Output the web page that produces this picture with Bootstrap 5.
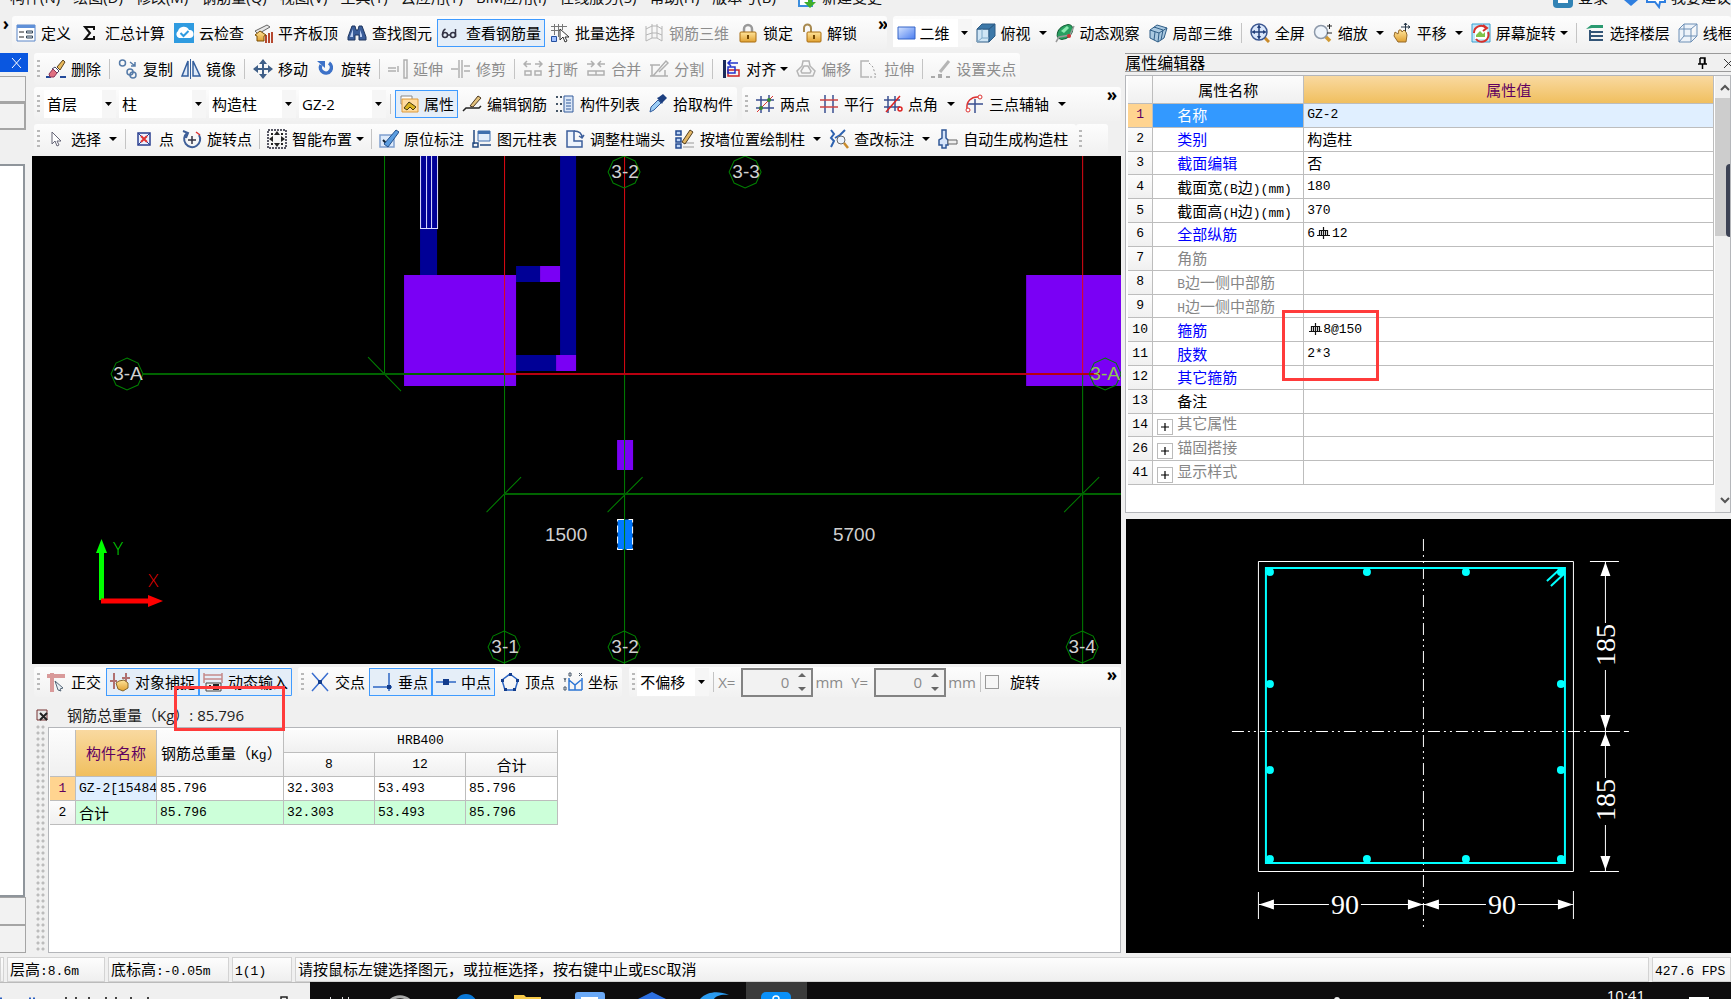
<!DOCTYPE html>
<html lang="zh-CN">
<head>
<meta charset="utf-8">
<meta name="viewport" content="width=device-width, initial-scale=1">
<title>钢筋算量</title>
<link href="https://cdn.jsdelivr.net/npm/bootstrap@5.3.0/dist/css/bootstrap.min.css" rel="stylesheet">
<style>
:root{--ui:"Open Sans","Noto Sans CJK SC",sans-serif;--song:"Liberation Mono","Noto Sans CJK SC",monospace}
body{font:15px/20px var(--ui);color:#000;background:#f0f0f0;height:100vh;overflow:hidden}
.menubar{height:16px;flex:none;padding-left:10px;overflow:hidden;white-space:nowrap}
.menubar a{color:#111;text-decoration:none;margin-right:13px;height:20px;margin-top:-13px;flex:none}
.menubar svg{width:20px;height:20px;margin:-11px 5px 0 0;flex:none}
.strip{background:linear-gradient(#fdfdfd,#f1f1f1);border-radius:3px;white-space:nowrap;overflow:hidden}
.row-a{height:33px}.row-b{height:32px}.row-c{height:34px}.row-d{height:30px}
.tool{display:inline-flex;align-items:center;gap:5px;font:15px/20px var(--ui);color:#000;border:1px solid transparent;border-radius:0;padding:0 3px;height:28px;flex:none}
.tool svg{width:20px;height:20px;flex:none}
.tool:disabled{color:#8d8d8d;opacity:1;border-color:transparent}
.tool.active,.tool.active:hover{background:#e5eef8;border-color:#3f9bff;color:#000}
.tri::after{content:"";border:4px solid transparent;border-top-color:#000;border-bottom:0;margin-left:-1px}
.split{width:16px;padding:0;border:0;background:none;height:28px;display:inline-flex;align-items:center;justify-content:center;flex:none}
.split::after{content:"";border:4px solid transparent;border-top-color:#000;border-bottom:0}
.parting{width:1px;height:20px;background:#c4c4c4;margin:0 4px;flex:none}
.parting.tight{margin:0 3px}
.grip{width:3px;height:18px;margin:0 2px 0 3px;flex:none;background:repeating-linear-gradient(#b9b9b9 0 2px,transparent 2px 5px)}
.more{font:700 17px/16px var(--ui);align-self:flex-start;border:0;background:none;padding:0}
.pick{appearance:none;border:0;height:28px;padding:0 16px 0 3px;font:15px/20px var(--ui);color:#000;border-radius:0;flex:none;
 background:#fff url("data:image/svg+xml,%3Csvg xmlns='http://www.w3.org/2000/svg' width='14' height='28'%3E%3Crect width='14' height='28' fill='%23f6f6f6'/%3E%3Cpath d='M3 12h7l-3.500 4z'/%3E%3C/svg%3E") right center no-repeat}
.w-s{width:72px}.w-m{width:87px}
.leftbar{width:28px;flex:none;margin-right:4px}
.leftbar .shut{height:19px;background:#0a57e0;color:#fff;border:0;padding:0 5px 0 0;text-align:right;line-height:0}
.leftbar .slot{width:26px;border:1px solid #a5a5a5;border-left:0;background:#f2f2f2}
.leftbar .blank{width:25px;border:2px solid #8f959b;border-left:0;background:#fff}
.scene{background:#000;min-height:0;flex:1 1 0;overflow:hidden}
.scene svg{display:block;width:100%;height:100%}
.side{flex:0 0 35%;min-width:0}
.side-title{height:19px;border:1px solid #9a9a9a;border-right:0;border-left:0;font:16px/17px "Noto Sans CJK SC",sans-serif}
.sheet{background:#fff;border:1px solid #b4b6ba}
.data{border-collapse:separate;border-spacing:0;font:15px/18px "Noto Sans CJK SC",sans-serif;table-layout:fixed}
.data th,.data td{border-right:1px solid #bdbdbd;border-bottom:1px solid #bdbdbd;padding:0 0 0 3px;font-weight:400;white-space:nowrap;overflow:hidden}
.data th{background:linear-gradient(#fcfcfc,#f0f0f0);text-align:center;padding:0}
.data th.hot,.data .hot{background:linear-gradient(#f9d9a0,#f0bf5f);color:#5f0060}
.data th.num{font:13px/18px var(--song)}
.data th.num.now{background:#ffd490;color:#5f0060}
.props{width:586px;height:409px;margin-left:2px}
.props tbody tr{height:23px}
.props tbody td:nth-child(2){padding-left:24px}
.props .b{color:#00f}.props .g{color:#868686}
.props tbody td:nth-child(2).fold{padding-left:4px}
.props .fold button{width:16px;height:16px;border:1px solid #bbb;background:#fff;padding:0;margin-right:4px;line-height:0;display:inline-flex;align-items:center;justify-content:center;vertical-align:-2px}
.m{font:13px/18px var(--song)}
span.m{line-height:10px}
.sum td{background:#ccffd9}
.scroller{width:15px;background:#f0f0f0}
.thumb{height:138px;background:#cdcdcd}
.mark-box{position:absolute;border:3px solid #ff3b3b;pointer-events:none}
.spin{width:72px;height:29px;border:2px solid #838383;background:#f2f2f2;margin:0 2px 0 6px}
.spin input{width:46px;border:0;background:none;text-align:right;color:#8a8a8a;padding:0;appearance:textfield}
.spin input::-webkit-inner-spin-button{display:none}
.dim{color:#8a8a8a}
.tick{appearance:none;width:14px;height:14px;border:1px solid #9a9a9a;background:#f6f6f6;margin:0}
.dots{width:10px;background:radial-gradient(circle at 2px 2px,#bcbcbc 1px,transparent 2px) 0 0/5px 6px}
.status{height:25px;gap:3px;margin-top:4px;font:15px/20px "Noto Sans CJK SC",sans-serif;white-space:nowrap}
.status>div{border:1px solid #d3d3d3;background:linear-gradient(#fdfdfd,#efefef);padding:1px 0 0 2px;overflow:hidden}
.taskbar{height:17px;background:#0e0d0e;overflow:hidden}
.taskbar .find{width:310px;background:#f0f0f0;border-top:1px solid #bbb}
.taskbar svg{display:block}
.clock{position:absolute;right:86px;top:3px;color:#fff;font:15px/20px var(--ui)}
</style>
</head>
<body class="d-flex flex-column">
<svg class="position-absolute" width="0" height="0" aria-hidden="true" xmlns="http://www.w3.org/2000/svg">
<defs>
<linearGradient id="gold" x2="0" y2="1"><stop stop-color="#ffe49a"/><stop offset="1" stop-color="#e0a030"/></linearGradient>
<linearGradient id="sky" x2="1" y2="1"><stop stop-color="#d5e4ff"/><stop offset="1" stop-color="#4a7df0"/></linearGradient>
</defs>
<symbol id="define" viewBox="0 0 20 20"><path fill="#fff" stroke="#5a86c8" d="M1 2h18v16H1z"/><path fill="#5f90d8" d="M1 2h18v3H1z"/><path stroke="#222" d="M3 9h5M3 14h5"/><path fill="#dde6f2" stroke="#345" d="M10.500 8h6v2h-6zM10.500 13h6v2h-6z"/></symbol>
<symbol id="sigma" viewBox="0 0 20 20"><path fill="none" stroke="#111" stroke-width="2" d="M14 7V4H5l5 6-5 6h9v-3"/></symbol>
<symbol id="cloud" viewBox="0 0 20 20"><path fill="#2f9be0" d="M0 0h20v20H0z"/><path fill="#fff" d="M5 15a4 4 0 0 1-1-7 6 6 0 0 1 11-1 4 4 0 0 1 1 8z"/><path fill="none" stroke="#2f9be0" stroke-width="2" d="M6.500 10l3 3 5-5"/></symbol>
<symbol id="slab" viewBox="0 0 20 20"><path fill="#e8e8e8" stroke="#666" d="M2 8l12-6 3 2L5 11z"/><path fill="#b5482f" d="M12 12h2v8h-2zM15 10h2v10h-2zM18 9h2v11h-2z"/><path fill="url(#gold)" stroke="#7a4d00" d="M2 12l5-4 6 4-2 1v5H4v-5z"/></symbol>
<symbol id="binoc" viewBox="0 0 20 20"><path fill="#3a5d99" stroke="#1d355f" d="M5 3h3l1 4h2l1-4h3l4 11v3h-7v-5H8v5H1v-3z"/><path fill="#b9cdf0" d="M4 11l2-5v8H3zM13 7l2 5v2h-2z"/></symbol>
<symbol id="glasses" viewBox="0 0 20 20"><g fill="none" stroke="#334" stroke-width="1.500"><circle cx="4" cy="12" r="2.500"/><circle cx="12" cy="12" r="2.500"/><path d="M1.500 12c0-3 1-5 3-6M14.500 14V6M6.500 12h3"/></g></symbol>
<symbol id="batch" viewBox="0 0 20 20"><path stroke="#777" d="M4.500 1v11M8.500 1v13M12.500 1v6M1 3.500h16M1 7.500h10"/><path fill="#9fc0ff" stroke="#234e9e" d="M1.500 13.500h5v5h-5z"/><path fill="#fff" stroke="#333" d="M10 6v11l3-3 2 5 2-1-2-4h4z"/></symbol>
<symbol id="rebar3d" viewBox="0 0 20 20"><path fill="none" stroke="#b5b5b5" d="M2 3v15M8 1v14M13 1v14M18 3v15M2 6l6-3h5l5 3M2 12l6-2h5l5 2M2 18l6-3h5l5 3"/></symbol>
<symbol id="lock" viewBox="0 0 20 20"><path fill="none" stroke="#999" stroke-width="2.500" d="M6 10V6a4 4 0 0 1 8 0v4"/><rect x="2" y="9" width="16" height="10" rx="1" fill="url(#gold)" stroke="#a86d10"/><path fill="#704500" d="M9 12h2v4H9z"/></symbol>
<symbol id="unlock" viewBox="0 0 20 20"><path fill="none" stroke="#a88a50" stroke-width="2" d="M2 9V5a3 3 0 0 1 7 0v4"/><rect x="5" y="9" width="14" height="10" rx="1" fill="url(#gold)" stroke="#a86d10"/><path fill="#704500" d="M11 12h2v4h-2z"/></symbol>
<symbol id="flat" viewBox="0 0 20 20"><path fill="url(#sky)" stroke="#3565c8" d="M1 4h17v12H1z"/></symbol>
<symbol id="cube" viewBox="0 0 20 20"><path fill="#cfe5f5" stroke="#2f5d86" d="M1 6h12v13H1z"/><path fill="#3c78a8" stroke="#2f5d86" d="M1 6l5-5h13l-6 5zM13 6l6-5v12l-6 6z"/><path fill="none" stroke="#7fa9c8" d="M6 6v9h7M6 15l-5 4"/></symbol>
<symbol id="orbit" viewBox="0 0 20 20"><ellipse cx="10" cy="9" rx="9" ry="6" fill="#28a060" stroke="#156038" transform="rotate(-40 10 9)"/><path fill="#8beab0" d="M6 8l6-5 2 2-5 5z"/><path fill="none" stroke="#999" stroke-width="1.500" d="M1 19l3-5 11-2 4-9"/><circle cx="14" cy="13" r="2" fill="#c33"/></symbol>
<symbol id="local3d" viewBox="0 0 20 20"><path fill="#a9c8e0" stroke="#2f5d86" d="M2 7l7-5 10 3-3 10-6 4-8-4z"/><path fill="none" stroke="#2f5d86" d="M2 7l9 3 8-5M11 10l-1 9M6 4l9 3-2 10M7 9l-1 8"/></symbol>
<symbol id="full" viewBox="0 0 20 20"><path stroke="#c98a2a" stroke-width="3" d="M14 14l5 5"/><circle cx="9" cy="9" r="8" fill="#d9e6fa" stroke="#3a5690" stroke-width="1.500"/><path stroke="#23407c" stroke-width="1.500" d="M9 3v12M3 9h12"/><path fill="#23407c" d="M9 1l2 4H7zM9 17l2-4H7zM1 9l4-2v4zM17 9l-4-2v4z"/></symbol>
<symbol id="zoom" viewBox="0 0 20 20"><path stroke="#d09a35" stroke-width="3.500" d="M12 13l5 5"/><circle cx="8" cy="9" r="6.500" fill="#eef4fb" stroke="#8d99aa" stroke-width="1.500"/><path stroke="#222" d="M14 3h5M16.500 1v5M14 10h5"/></symbol>
<symbol id="hand" viewBox="0 0 20 20"><path fill="url(#gold)" stroke="#94692a" d="M3 9l3 2 1-4h2l1 2 2-2 2 2 1 3-1 7H6l-4-6z"/><path fill="none" stroke="#234" d="M13.500 0v8M9 4h9M12 2l1.500-2L15 2M16 2.500L18 4l-2 1.500"/></symbol>
<symbol id="spinview" viewBox="0 0 20 20"><path fill="#bfe6fa" stroke="#3aa0d0" d="M1 1h18v18H1z"/><path fill="#fff" d="M4 4h12v12H4z"/><path fill="#7fc24a" d="M5 12l4-4 3 3 2-2v5H5z"/><path fill="none" stroke="#d8302a" stroke-width="2" d="M3 10a7 7 0 0 1 12-5M17 9a7 7 0 0 1-12 7M12 2l4 3-4 3"/></symbol>
<symbol id="floors" viewBox="0 0 20 20"><path fill="#2a9a70" d="M1 6l5-4h12v3H7z"/><path fill="none" stroke="#357" stroke-width="2" d="M5 9h13M5 13h13M5 17h13M5 7v11"/></symbol>
<symbol id="wire" viewBox="0 0 20 20"><path fill="#edf3fa" stroke="#6d8fb5" d="M1 6h12v13H1zM1 6l5-5h13l-6 5M19 1v12l-6 6M6 1v12l-5 6M6 13h13"/></symbol>
<symbol id="erase" viewBox="0 0 20 20"><path fill="#234a9a" d="M0 17h5v2H0zM14 17h6v2h-6z"/><path fill="#e8b85a" stroke="#5b4420" d="M11 8l6-7 2 2-5 8z"/><path fill="#fff" stroke="#446" d="M9 8l4 4-2 2-5-4z"/><path fill="#e07080" stroke="#835" d="M7 10l4 4-3 4H4l-1-3z"/></symbol>
<symbol id="copy" viewBox="0 0 20 20"><g fill="none" stroke="#567ba8" stroke-width="1.500"><circle cx="4.500" cy="4" r="3"/><circle cx="12" cy="13" r="3"/><circle cx="15" cy="16" r="3"/><path d="M12 3l5 4M17 3v4h-4"/></g></symbol>
<symbol id="mirror" viewBox="0 0 20 20"><path fill="#dfeaf8" stroke="#345f9d" stroke-width="1.500" d="M7 2v15H1zM12 2v15h7z"/><path stroke="#345f9d" d="M9.500 0v20"/></symbol>
<symbol id="move" viewBox="0 0 20 20"><path stroke="#3f5f88" stroke-width="2" d="M10 3v14M3 10h14"/><path fill="#3f5f88" d="M10 0l4 5H6zM10 20l4-5H6zM0 10l5-4v8zM20 10l-5-4v8z"/></symbol>
<symbol id="turn" viewBox="0 0 20 20"><path fill="none" stroke="#3d72c8" stroke-width="3.500" d="M5 6a5.500 5.500 0 1 0 8-2"/><path fill="#3d72c8" d="M1 2h8v7z"/></symbol>
<symbol id="extend" viewBox="0 0 20 20"><path fill="none" stroke="#b0b0b0" stroke-width="1.500" d="M0 9h8M0 12h8M16 1h3v18h-3zM10 7v6"/></symbol>
<symbol id="trim" viewBox="0 0 20 20"><path fill="none" stroke="#b0b0b0" stroke-width="1.500" d="M0 10h7M8 1v18M11 1v18M13 7h6M13 12h6"/></symbol>
<symbol id="snap2" viewBox="0 0 20 20"><path fill="none" stroke="#b0b0b0" stroke-width="1.500" d="M1 5h7M12 5h7M4 2L1 5l3 3M16 2l3 3-3 3M2 12h6v4H2zM12 12h6v4h-6z"/></symbol>
<symbol id="merge" viewBox="0 0 20 20"><path fill="none" stroke="#b0b0b0" stroke-width="1.500" d="M1 5h7M12 5h7M5 2l3 3-3 3M15 2l-3 3 3 3M2 12h16v4H2zM10 12v4"/></symbol>
<symbol id="cut" viewBox="0 0 20 20"><path fill="none" stroke="#b0b0b0" stroke-width="1.500" d="M1 6h10M3 6v11h13v-6M1 17h18M4 17L17 2l2 2-9 9"/></symbol>
<symbol id="align" viewBox="0 0 20 20"><path fill="#1a2a5a" d="M2 1h3v18H2z"/><path fill="none" stroke="#c22" stroke-width="1.500" d="M7 11h11v6H7z"/><path fill="none" stroke="#23c" stroke-width="1.500" d="M7 8h7v6H7zM17 4H8M10 1L7 4l3 3"/></symbol>
<symbol id="offset" viewBox="0 0 20 20"><path fill="none" stroke="#b5b5b5" stroke-width="1.500" d="M7 2h6l1 5 5 5-2 5H3l-2-5 5-5zM8 7h4l3 5-1 2H6l-1-2z"/></symbol>
<symbol id="stretch" viewBox="0 0 20 20"><path fill="none" stroke="#b5b5b5" stroke-width="1.500" d="M10 2H2v16h8"/><path fill="none" stroke="#999" stroke-dasharray="2 2" d="M10 4l4 4 3 10h-8"/></symbol>
<symbol id="clamp" viewBox="0 0 20 20"><path fill="#aaa" d="M0 17h4v2H0zM7 15h4v4H7zM15 17h4v2h-4z"/><path stroke="#b5b5b5" stroke-width="3" d="M9 13l9-11"/></symbol>
<symbol id="props" viewBox="0 0 20 20"><path fill="#fff" stroke="#888" d="M2 2h11v8H2z"/><path fill="#ffdca0" stroke="#dd9a3d" d="M3 5h16v13H3z"/><path fill="#d9b220" stroke="#453a10" d="M5 14l5-6 7 5-3 3-3-3-3 3z"/></symbol>
<symbol id="editbar" viewBox="0 0 20 20"><path fill="none" stroke="#222" stroke-width="1.500" d="M1 17l3-3h13l2-2"/><path fill="#e3c27c" stroke="#4b3720" d="M8 12L16 2l3 2-8 9z"/></symbol>
<symbol id="list" viewBox="0 0 20 20"><path stroke="#456" stroke-width="2" stroke-dasharray="2 2" d="M1 3h6M1 10h6M1 17h6"/><path fill="#dbe7f7" stroke="#345d9c" d="M9 2h9v16H9z"/><path stroke="#345d9c" d="M11 6h5M11 9h5M11 12h5M11 15h5"/></symbol>
<symbol id="dropper" viewBox="0 0 20 20"><path fill="#9ccdf5" stroke="#345d9c" d="M2 18l1-5 7-7 3 3-7 7z"/><path fill="#1c3f80" d="M9 4l2-1 4-3 4 4-4 4-1 2z"/></symbol>
<symbol id="axis2" viewBox="0 0 20 20"><path stroke="#3a4f90" stroke-width="1.500" d="M6 2v17M14 1v17M1 6h18M1 14h18"/><path stroke="#d33" d="M2 18L18 2"/><circle cx="6" cy="14" r="2" fill="#383"/><circle cx="14" cy="6" r="2" fill="#383"/></symbol>
<symbol id="parallel" viewBox="0 0 20 20"><path stroke="#3a4f90" stroke-width="1.500" d="M6 1v18M14 1v18"/><path stroke="#c44" stroke-width="1.500" d="M1 6h18M1 13h18"/></symbol>
<symbol id="angle" viewBox="0 0 20 20"><path stroke="#3a4f90" stroke-width="1.500" d="M5 2v17M12 2v15M1 6h16M1 13h16"/><path stroke="#d22" stroke-width="1.500" d="M3 18L17 2"/><circle cx="17" cy="15" r="2" fill="none" stroke="#d22" stroke-width="1.500"/></symbol>
<symbol id="three" viewBox="0 0 20 20"><path stroke="#3a4f90" stroke-width="1.500" d="M11 5v14M4 10h15"/><path fill="none" stroke="#d33" stroke-width="1.500" d="M3 15C2 8 7 2 15 3"/><circle cx="4" cy="16" r="2" fill="#fff" stroke="#d33"/><circle cx="16" cy="3" r="2" fill="#fff" stroke="#d33"/></symbol>
<symbol id="arrow" viewBox="0 0 20 20"><path fill="#fff" stroke="#667" d="M6 3v12l3-3 2 5 2-1-2-4h4z"/></symbol>
<symbol id="point" viewBox="0 0 20 20"><path fill="#eef2ff" stroke="#2a3f90" stroke-width="1.500" d="M4 4h12v12H4z"/><path stroke="#2a3f90" d="M4 4l12 12M16 4L4 16"/><path stroke="#d33" stroke-width="2" d="M7 7l6 6M13 7l-6 6"/></symbol>
<symbol id="rotpt" viewBox="0 0 20 20"><path fill="none" stroke="#3f5f98" stroke-width="2" d="M5 4a8 8 0 1 0 12 2M1 2l5 2-2 5"/><path stroke="#334" stroke-width="1.500" d="M10 7v8M6 11h8"/><path stroke="#d33" stroke-width="1.500" d="M14 3l4 3"/></symbol>
<symbol id="smart" viewBox="0 0 20 20"><path fill="none" stroke="#223" stroke-dasharray="2 1" stroke-width="1.500" d="M1 1h18v18H1z"/><path fill="#222" d="M10 2l3 4H7zM10 18l3-4H7zM2 10l4-3v6zM18 10l-4-3v6zM4 4h2v2H4zM14 4h2v2h-2zM4 14h2v2H4zM14 14h2v2h-2z"/></symbol>
<symbol id="inplace" viewBox="0 0 20 20"><path fill="#dce9fa" stroke="#7f9fce" stroke-width="1.500" d="M1 6h14v12H1z"/><path fill="none" stroke="#123" stroke-width="2" d="M4 11l4 4"/><path fill="#5b9de0" stroke="#23508a" d="M5 15L17 1l3 2L9 18z"/></symbol>
<symbol id="coltab" viewBox="0 0 20 20"><path fill="#e3edfb" stroke="#3f6fae" d="M6 2h12v10H6z"/><path fill="#3f6fae" d="M6 2h12v3H6z"/><path fill="none" stroke="#234a80" stroke-width="1.500" d="M2 1v14M1 14h5v4H1zM8 16h11"/></symbol>
<symbol id="colend" viewBox="0 0 20 20"><path fill="#eef4fc" stroke="#3d5f9c" stroke-width="1.500" d="M2 2h7v10h8v6H2z"/><path fill="none" stroke="#3d5f9c" stroke-width="1.500" d="M9 2c5 0 8 2 8 7M14 7l3 2 2-3"/></symbol>
<symbol id="wallcol" viewBox="0 0 20 20"><path fill="#b9d2f5" stroke="#234a90" stroke-width="1.500" d="M1 2h5v4H1zM1 9h5v4H1zM1 15h5v4H1z"/><path stroke="#999" d="M8 14h11M8 18h11"/><path fill="#e3b765" stroke="#533f20" d="M7 13L15 1l3 2-8 12z"/></symbol>
<symbol id="check" viewBox="0 0 20 20"><path fill="none" stroke="#2d62b0" stroke-width="2" d="M2 1l3 4-3 4 3 3-3 6M6 9l5-3 5-5"/><circle cx="12" cy="11" r="4" fill="#eaf3ff" stroke="#666"/><path stroke="#c98a2a" stroke-width="2.500" d="M15 14l4 5"/></symbol>
<symbol id="autocol" viewBox="0 0 20 20"><path fill="#d5e4fa" stroke="#2f5796" stroke-width="1.500" d="M4 1h4v8l2 2v5H8v3H4v-3H1v-5l3-2z"/><path fill="#eee" stroke="#666" d="M10 11h9v4h-9z"/></symbol>
<symbol id="ortho" viewBox="0 0 20 20"><path fill="none" stroke="#d99a9a" stroke-width="4" d="M1 4h18M6 1v19"/><path fill="#e8eef4" stroke="#567" d="M9 9l8 7-3 1 1 2-3-1z"/></symbol>
<symbol id="osnap" viewBox="0 0 20 20"><path stroke="#b07070" stroke-width="2" d="M0 9h7M4 1v16M16 1v9M12 6h8"/><path fill="url(#gold)" stroke="#86672a" d="M6 11l3-2 5-1 4 3v5l-5 3-5-2z"/></symbol>
<symbol id="dyn" viewBox="0 0 20 20"><path fill="none" stroke="#c58a8a" stroke-width="1.500" d="M1 1v10M19 1v10M1 3h18M1 7h18"/><path fill="#eee" stroke="#444" d="M3 11h15v8H3z"/><path stroke="#222" stroke-width="2" d="M7 13v4M11 13h4v4h-4z" fill="none"/></symbol>
<symbol id="cross" viewBox="0 0 20 20"><path stroke="#3b6fd0" stroke-width="1.500" d="M2 1l16 18M18 1L2 19"/><path fill="#123c8c" d="M8 8h4v4H8z"/></symbol>
<symbol id="perp" viewBox="0 0 20 20"><path stroke="#2d66c4" stroke-width="1.500" d="M0 15h19M16 1v18"/><path fill="#123c8c" d="M14 13h4v4h-4z"/></symbol>
<symbol id="mid" viewBox="0 0 20 20"><path stroke="#2d66c4" stroke-width="1.500" d="M0 10h20"/><path fill="#123c8c" d="M7 7h6v6H7z"/></symbol>
<symbol id="vertex" viewBox="0 0 20 20"><path fill="none" stroke="#2d66c4" stroke-width="1.500" d="M10 2l8 6-3 10H5L2 8z"/><path fill="#123c8c" d="M9 1h3v3H9zM16 7h3v3h-3zM1 7h3v3H1zM4 16h3v3H4zM13 16h3v3h-3z"/></symbol>
<symbol id="coord" viewBox="0 0 20 20"><path fill="none" stroke="#2d76d4" stroke-width="1.500" d="M6 6v12h13M6 8l6 5 6-5M12 13v5M19 6v12"/><path fill="none" stroke="#456" d="M6 1h2v3H6zM16 1l3 3M19 1l-3 3M1 6l1 2 1-2M2 8v2M1 15h2v3H1z"/></symbol>
<symbol id="phi" viewBox="0 0 14 14"><path fill="none" stroke="#111" stroke-width="1.200" d="M7.500 1v12M3.500 4v6M11.500 4v6M3.500 4.500h8M1 9.500h13M5.500 4v6M9.500 4v6"/></symbol>
<symbol id="plus" viewBox="0 0 10 10"><path stroke="#000" stroke-width="1.500" d="M0 5h10M5 0v10"/></symbol>
</svg>

<nav class="menubar d-flex align-items-start" aria-label="主菜单">
<a href="#">构件(N)</a><a href="#">绘图(D)</a><a href="#">修改(M)</a><a href="#">钢筋量(Q)</a><a href="#">视图(V)</a><a href="#">工具(T)</a><a href="#">云应用(Y)</a><a href="#">BIM应用(I)</a><a href="#">在线服务(S)</a><a href="#">帮助(H)</a><a href="#">版本号(B)</a>
<svg class="ms-2" viewBox="0 0 20 20"><path fill="#fff" stroke="#3b8ddd" stroke-width="2" d="M2 0h13v17H2z"/><path fill="#3fae2a" d="M11 8h4v5h4l-6 6-6-6h4z"/></svg><a href="#">新建变更</a>
<span class="ms-auto"></span>
<svg viewBox="0 0 20 20"><rect width="20" height="19" rx="4" fill="#3283b5"/><path fill="#fff" d="M5 5h10v9H5z"/></svg><a href="#">登录</a>
<svg viewBox="0 0 20 20"><path fill="#2f7fe0" d="M3 11h14l-7 6z"/></svg>
<svg viewBox="0 0 20 20"><path fill="#fff" stroke="#2f7fe0" stroke-width="2" d="M1 0h18v13h-5l-1 5-4-5H1z"/></svg><a href="#" class="me-0">我要建议</a>
</nav>

<div class="d-flex mb-1">
 <button class="more" style="width:12px" aria-label="更多">›</button>
 <div class="strip row-a d-flex align-items-center" style="gap:1px">
  <button class="btn tool"><svg><use href="#define"/></svg>定义</button>
  <button class="btn tool"><svg><use href="#sigma"/></svg>汇总计算</button>
  <button class="btn tool"><svg><use href="#cloud"/></svg>云检查</button>
  <button class="btn tool"><svg><use href="#slab"/></svg>平齐板顶</button>
  <button class="btn tool"><svg><use href="#binoc"/></svg>查找图元</button>
  <button class="btn tool active"><svg><use href="#glasses"/></svg>查看钢筋量</button>
  <button class="btn tool"><svg><use href="#batch"/></svg>批量选择</button>
  <button class="btn tool" disabled><svg><use href="#rebar3d"/></svg>钢筋三维</button>
  <button class="btn tool"><svg><use href="#lock"/></svg>锁定</button>
  <button class="btn tool"><svg><use href="#unlock"/></svg>解锁</button>
  <button class="more ms-3 me-1" aria-label="更多工具">»</button>
 </div>
 <div class="strip row-a d-flex align-items-center flex-fill" style="margin-left:6px">
  <label class="d-flex align-items-center bg-white ps-1"><svg width="20" height="20"><use href="#flat"/></svg><select class="pick" aria-label="视图维度" style="width:55px"><option>二维</option></select></label>
  <button class="btn tool"><svg><use href="#cube"/></svg>俯视</button><button class="split" aria-label="俯视选项"></button>
  <button class="btn tool"><svg><use href="#orbit"/></svg>动态观察</button>
  <button class="btn tool"><svg><use href="#local3d"/></svg>局部三维</button>
  <span class="parting"></span>
  <button class="btn tool"><svg><use href="#full"/></svg>全屏</button>
  <button class="btn tool"><svg><use href="#zoom"/></svg>缩放</button><button class="split" aria-label="缩放选项"></button>
  <button class="btn tool"><svg><use href="#hand"/></svg>平移</button><button class="split" aria-label="平移选项"></button>
  <button class="btn tool tri"><svg><use href="#spinview"/></svg>屏幕旋转</button>
  <span class="parting"></span>
  <button class="btn tool"><svg><use href="#floors"/></svg>选择楼层</button>
  <button class="btn tool"><svg><use href="#wire"/></svg>线框</button>
 </div>
</div>

<main class="d-flex flex-fill" style="min-height:0">
 <aside class="leftbar d-flex flex-column" aria-label="导航">
  <button class="shut" aria-label="关闭"><svg width="12" height="12" viewBox="0 0 12 12"><path stroke="#fff" d="M1 1l9 10M10 1L1 11"/></svg></button>
  <div class="slot mt-1" style="height:26px"></div><div class="slot" style="height:28px;border-width:2px"></div><div style="height:34px"></div>
  <div class="blank flex-fill"></div><div class="slot" style="height:28px"></div><div class="slot" style="height:28px"></div>
 </aside>

 <section class="d-flex flex-column flex-fill me-1" style="min-width:0">
  <div class="d-flex" style="margin:0 0 2px 2px"><div class="strip row-b d-flex align-items-center">
   <span class="grip"></span>
   <button class="btn tool"><svg><use href="#erase"/></svg>删除</button><span class="parting"></span>
   <button class="btn tool"><svg><use href="#copy"/></svg>复制</button><button class="btn tool"><svg><use href="#mirror"/></svg>镜像</button><span class="parting"></span>
   <button class="btn tool"><svg><use href="#move"/></svg>移动</button><button class="btn tool"><svg><use href="#turn"/></svg>旋转</button><span class="parting"></span>
   <button class="btn tool" disabled><svg><use href="#extend"/></svg>延伸</button><button class="btn tool" disabled><svg><use href="#trim"/></svg>修剪</button><span class="parting"></span>
   <button class="btn tool" disabled><svg><use href="#snap2"/></svg>打断</button><button class="btn tool" disabled><svg><use href="#merge"/></svg>合并</button><button class="btn tool" disabled><svg><use href="#cut"/></svg>分割</button><span class="parting"></span>
   <button class="btn tool tri"><svg><use href="#align"/></svg>对齐</button><button class="btn tool" disabled><svg><use href="#offset"/></svg>偏移</button><button class="btn tool" disabled><svg><use href="#stretch"/></svg>拉伸</button><span class="parting"></span>
   <button class="btn tool" disabled><svg><use href="#clamp"/></svg>设置夹点</button>
  </div></div>

  <div class="d-flex" style="margin:0 0 3px 2px">
   <div class="strip row-c d-flex align-items-center">
    <span class="grip"></span>
    <div class="d-flex" style="gap:3px;margin-left:2px">
     <select class="pick w-s" aria-label="楼层"><option>首层</option></select><select class="pick w-m" aria-label="构件类别"><option>柱</option></select><select class="pick w-m" aria-label="构件类型"><option>构造柱</option></select><select class="pick w-m" aria-label="构件"><option>GZ-2</option></select>
    </div><span class="parting"></span>
    <button class="btn tool active"><svg><use href="#props"/></svg>属性</button><button class="btn tool"><svg><use href="#editbar"/></svg>编辑钢筋</button><button class="btn tool"><svg><use href="#list"/></svg>构件列表</button><button class="btn tool"><svg><use href="#dropper"/></svg>拾取构件</button>
   </div>
   <div class="strip row-c d-flex align-items-center flex-fill" style="gap:1px;margin-left:5px">
    <span class="grip"></span>
    <button class="btn tool"><svg><use href="#axis2"/></svg>两点</button><button class="btn tool"><svg><use href="#parallel"/></svg>平行</button><button class="btn tool"><svg><use href="#angle"/></svg>点角</button><button class="split" aria-label="点角选项"></button><button class="btn tool"><svg><use href="#three"/></svg>三点辅轴</button><button class="split" aria-label="辅轴选项"></button>
    <button class="more ms-auto me-1" aria-label="更多工具">»</button>
   </div>
  </div>

  <div class="d-flex" style="margin:0 0 2px 2px">
   <div class="strip row-d d-flex align-items-center pe-1">
    <span class="grip"></span>
    <button class="btn tool"><svg><use href="#arrow"/></svg>选择</button><button class="split" aria-label="选择选项"></button><span class="parting"></span>
    <button class="btn tool"><svg><use href="#point"/></svg>点</button><button class="btn tool"><svg><use href="#rotpt"/></svg>旋转点</button><span class="parting tight"></span>
    <button class="btn tool tri"><svg><use href="#smart"/></svg>智能布置</button><span class="parting tight"></span>
    <button class="btn tool"><svg><use href="#inplace"/></svg>原位标注</button><button class="btn tool"><svg><use href="#coltab"/></svg>图元柱表</button><button class="btn tool"><svg><use href="#colend"/></svg>调整柱端头</button><button class="btn tool" style="margin-left:2px"><svg><use href="#wallcol"/></svg>按墙位置绘制柱</button><button class="split" aria-label="绘制选项"></button><button class="btn tool"><svg><use href="#check"/></svg>查改标注</button><button class="split" aria-label="标注选项"></button><button class="btn tool"><svg><use href="#autocol"/></svg>自动生成构造柱</button>
   </div>
   <div class="strip row-d d-flex align-items-center pe-4"><span class="grip"></span></div>
  </div>

  <div class="scene">
   <svg viewBox="32 156 1089 508" preserveAspectRatio="xMinYMin slice" font-family="Liberation Sans, sans-serif" font-size="19" role="img" aria-label="平面图">
    <g fill="#000096"><path d="M420 156h17v119h-17zM560 156h16v199h-16zM516 266h24v16h-24zM516 355h40v16h-40z"/></g>
    <path fill="none" stroke="#dcdcff" d="M420.500 156v72.500h17V156M426.500 156v72M431.500 156v72"/>
    <path fill="#7a00f5" d="M404 275h112v111H404zM540 266h20v16h-20zM556 355h20v16h-20zM1026 275h95v111h-95zM617 440h16v30h-16z"/>
    <rect x="617.500" y="519.500" width="15" height="30" fill="#0078ff" stroke="#fff" stroke-dasharray="7 4"/>
    <g fill="none" stroke="#008000"><path d="M384.500 156v218M368 357l33 34M504.500 374v274M624.500 374v290M1082.500 374v290M504.500 647v17M486.500 512L521 477M607.500 512l35-35M1064 512l35-35"/><path stroke="#006400" stroke-width="2" d="M143 374h361M504 494h617"/></g>
    <g fill="none" stroke="#e00a14"><path d="M504.500 156v218M624.500 156v218M1082.500 156v218"/><path stroke="#b80010" stroke-width="2" d="M504 374h596"/></g>
    <g fill="none" stroke="#008000"><path id="ring" d="M127 358l11 5 5 11-5 11-11 5-11-5-5-11 5-11z"/><use href="#ring" x="377" y="273"/><use href="#ring" x="497" y="273"/><use href="#ring" x="955" y="273"/><use href="#ring" x="497" y="-202"/><use href="#ring" x="618" y="-202"/><use href="#ring" x="978"/></g>
    <g fill="#d0d0d0" text-anchor="middle"><text x="128" y="380">3-A</text><text x="505" y="653">3-1</text><text x="625" y="653">3-2</text><text x="1082" y="653">3-4</text><text x="625" y="178">3-2</text><text x="746" y="178">3-3</text><text x="1105" y="380" fill="#8fc850">3-A</text><text x="566" y="541">1500</text><text x="854" y="541">5700</text></g>
    <path stroke="#0f0" stroke-width="5" d="M101.500 600v-50"/><path fill="#0f0" d="M101.500 539l5.500 14H96z"/>
    <path stroke="#f00" stroke-width="5" d="M101 601h48"/><path fill="#f00" d="M163 601l-15 6v-12z"/>
    <g font-family="Lato, sans-serif" font-weight="300" font-size="17"><text x="113" y="555" fill="#00e000">Y</text><text x="148" y="587" fill="#f00000">X</text></g>
   </svg>
  </div>

  <div class="position-relative">
   <div class="d-flex" style="margin:3px 0 0 2px">
    <div class="strip row-d d-flex align-items-center"><span class="grip"></span>
     <button class="btn tool me-px"><svg><use href="#ortho"/></svg>正交</button><button class="btn tool active" style="margin-left:1px"><svg><use href="#osnap"/></svg>对象捕捉</button><button class="btn tool active"><svg><use href="#dyn"/></svg>动态输入</button></div>
    <div class="strip row-d d-flex align-items-center" style="margin-left:6px"><span class="grip"></span>
     <button class="btn tool"><svg><use href="#cross"/></svg>交点</button><button class="btn tool active"><svg><use href="#perp"/></svg>垂点</button><button class="btn tool active"><svg><use href="#mid"/></svg>中点</button><button class="btn tool" style="margin-left:1px"><svg><use href="#vertex"/></svg>顶点</button><button class="btn tool"><svg><use href="#coord"/></svg>坐标</button></div>
    <div class="strip row-d d-flex align-items-center flex-fill" style="margin-left:7px"><span class="grip"></span>
     <select class="pick w-s" aria-label="偏移方式"><option>不偏移</option></select><span class="parting"></span>
     <label class="dim" for="dx">X=</label><span class="spin d-inline-flex align-items-center"><input id="dx" type="number" value="0"><svg width="22" height="24" viewBox="0 0 22 24"><path fill="#666" d="M9 7l4-4 4 4zM9 17l4 4 4-4z"/></svg></span><span class="dim">mm</span>
     <label class="dim ms-2" for="dy">Y=</label><span class="spin d-inline-flex align-items-center"><input id="dy" type="number" value="0"><svg width="22" height="24" viewBox="0 0 22 24"><path fill="#666" d="M9 7l4-4 4 4zM9 17l4 4 4-4z"/></svg></span><span class="dim">mm</span>
     <span class="parting"></span><input class="tick" type="checkbox" id="rot"><label for="rot" style="margin-left:11px">旋转</label>
     <button class="more ms-auto me-1" aria-label="更多工具">»</button></div>
   </div>
   <div class="d-flex" style="height:256px">
    <div class="d-flex flex-column" style="width:16px">
     <button class="border-0 bg-transparent p-0 ps-1 pt-2" style="height:28px;line-height:0" aria-label="关闭面板"><svg width="12" height="12" viewBox="0 0 12 12"><path fill="#e8e8e8" stroke="#733" d="M1 1h10v10H1z"/><path stroke="#222" stroke-width="2" d="M4 4l7 7M11 4l-7 7"/></svg></button>
     <div class="dots flex-fill ms-1"></div>
    </div>
    <div class="d-flex flex-column flex-fill">
     <div style="height:30px;padding:8px 0 0 19px;color:#222">钢筋总重量（Kg）: 85.796</div>
     <div class="sheet flex-fill">
      <table class="data" style="width:508px;margin:2px 0 0 1px">
       <colgroup><col style="width:26px"><col style="width:81px"><col style="width:127px"><col style="width:91px"><col style="width:91px"><col style="width:92px"></colgroup>
       <thead><tr style="height:23px"><th rowspan="2"></th><th rowspan="2" class="hot">构件名称</th><th rowspan="2" class="text-start ps-1">钢筋总重量（<span class="m">Kg</span>）</th><th colspan="3" class="m">HRB400</th></tr>
       <tr style="height:24px"><th class="m">8</th><th class="m">12</th><th>合计</th></tr></thead>
       <tbody><tr style="height:24px"><th class="num now">1</th><td class="m" style="background:#e0efff">GZ-2[15484</td><td class="m">85.796</td><td class="m">32.303</td><td class="m">53.493</td><td class="m">85.796</td></tr>
       <tr class="sum" style="height:24px"><th class="num">2</th><td>合计</td><td class="m">85.796</td><td class="m">32.303</td><td class="m">53.493</td><td class="m">85.796</td></tr></tbody>
      </table>
     </div>
    </div>
   </div>
   <div class="mark-box" style="left:142px;top:22px;width:111px;height:45px"></div>
  </div>
 </section>

 <section class="side d-flex flex-column">
  <div class="side-title d-flex align-items-center"><span>属性编辑器</span>
   <svg class="ms-auto" width="12" height="14" viewBox="0 0 12 14"><path fill="none" stroke="#000" stroke-width="1.500" d="M3 2h5v6M3 2v6M1 8h9M5.500 8v5M7.500 2v6"/></svg><svg style="margin:0 -3px 0 13px" width="12" height="12" viewBox="0 0 12 12"><path stroke="#333" d="M2 2l9 9M11 2l-9 9"/></svg></div>
  <div class="sheet d-flex position-relative" style="margin:3px 0 6px;height:438px">
   <table class="data props">
    <colgroup><col style="width:25px"><col style="width:151px"><col></colgroup>
    <thead><tr style="height:28px"><th></th><th>属性名称</th><th class="hot">属性值</th></tr></thead>
    <tbody>
    <tr><th class="num now">1</th><td style="background:#3399ff;color:#fff">名称</td><td class="m" style="background:#e0efff">GZ-2</td></tr>
    <tr><th class="num">2</th><td class="b">类别</td><td>构造柱</td></tr>
    <tr><th class="num">3</th><td class="b">截面编辑</td><td>否</td></tr>
    <tr><th class="num">4</th><td>截面宽<span class="m">(B</span>边<span class="m">)(mm)</span></td><td class="m">180</td></tr>
    <tr><th class="num">5</th><td>截面高<span class="m">(H</span>边<span class="m">)(mm)</span></td><td class="m">370</td></tr>
    <tr><th class="num">6</th><td class="b">全部纵筋</td><td class="m">6<svg width="14" height="14" style="vertical-align:-3px;margin:0 2px 0 1px"><use href="#phi"/></svg>12</td></tr>
    <tr><th class="num">7</th><td class="g">角筋</td><td></td></tr>
    <tr><th class="num">8</th><td class="g"><span class="m">B</span>边一侧中部筋</td><td></td></tr>
    <tr><th class="num">9</th><td class="g"><span class="m">H</span>边一侧中部筋</td><td></td></tr>
    <tr><th class="num">10</th><td class="b">箍筋</td><td class="m"><svg width="14" height="14" style="vertical-align:-3px;margin:0 1px"><use href="#phi"/></svg>8@150</td></tr>
    <tr><th class="num">11</th><td class="b">肢数</td><td class="m">2*3</td></tr>
    <tr><th class="num">12</th><td class="b">其它箍筋</td><td></td></tr>
    <tr><th class="num">13</th><td>备注</td><td></td></tr>
    <tr><th class="num">14</th><td class="g fold"><button aria-label="展开"><svg width="8" height="8"><use href="#plus"/></svg></button>其它属性</td><td></td></tr>
    <tr><th class="num">26</th><td class="g fold"><button aria-label="展开"><svg width="8" height="8"><use href="#plus"/></svg></button>锚固搭接</td><td></td></tr>
    <tr><th class="num">41</th><td class="g fold"><button aria-label="展开"><svg width="8" height="8"><use href="#plus"/></svg></button>显示样式</td><td></td></tr>
    </tbody>
   </table>
   <div class="scroller ms-auto d-flex flex-column"><svg width="15" height="22" viewBox="0 0 15 22"><path fill="none" stroke="#555" stroke-width="2" d="M6 14l4-4 4 4"/></svg><div class="thumb"></div><svg class="mt-auto" width="15" height="24" viewBox="0 0 15 24"><path fill="none" stroke="#555" stroke-width="2" d="M6 10l4 4 4-4"/></svg></div>
   <div class="mark-box" style="left:156px;top:234px;width:97px;height:71px"></div>
   <div class="position-absolute end-0 rounded-start" style="top:88px;width:4px;height:73px;background:#3c4254"></div>
  </div>
  <div class="scene" style="margin-left:1px">
   <svg viewBox="1126 519 605 434" preserveAspectRatio="xMidYMid slice" role="img" aria-label="柱截面图">
    <path fill="none" stroke="#fff" d="M1258.500 561.500h315v310h-315zM1590 561.500h29M1590 731.500h29M1590 871.500h29M1605.500 562v61M1605.500 670v108M1605.500 825v46M1258.500 892v27M1573.500 891v28M1259 904.500h70M1361 904.500h125M1518 904.500h55"/>
    <path fill="none" stroke="#fff" stroke-dasharray="12 4 2 4 2 4" d="M1423.500 539v392M1232 731.500h397"/>
    <rect x="1266" y="568" width="299" height="295" fill="none" stroke="#0ff" stroke-width="2"/>
    <path stroke="#0ff" stroke-width="2" d="M1547 581l12-11M1551 586l14-13"/>
    <g fill="#0ff"><circle cx="1270" cy="572" r="4"/><circle cx="1367" cy="572" r="4"/><circle cx="1466" cy="572" r="4"/><circle cx="1561" cy="572" r="4"/><circle cx="1270" cy="684" r="4"/><circle cx="1561" cy="684" r="4"/><circle cx="1270" cy="770" r="4"/><circle cx="1561" cy="770" r="4"/><circle cx="1270" cy="859" r="4"/><circle cx="1367" cy="859" r="4"/><circle cx="1466" cy="859" r="4"/><circle cx="1561" cy="859" r="4"/></g>
    <path fill="#fff" d="M1605.500 562l5 14h-10zM1605.500 730l5-15h-10zM1605.500 733l5 13h-10zM1605.500 870l5-14h-10zM1259 904.500l15-5v10zM1423 904.500l-15-5v10zM1424 904.500l15-5v10zM1573 904.500l-15-5v10z"/>
    <g fill="#fff" font-family="Liberation Serif, serif" font-size="28" text-anchor="middle"><text x="1345" y="914">90</text><text x="1502" y="914">90</text><text transform="translate(1615 645) rotate(-90)">185</text><text transform="translate(1615 800) rotate(-90)">185</text></g>
   </svg>
  </div>
 </section>
</main>

<footer class="status d-flex">
 <div style="width:4px"></div><div style="width:98px">层高<span class="m">:8.6m</span></div><div style="width:121px">底标高<span class="m">:-0.05m</span></div><div style="width:60px"><span class="m">1(1)</span></div><div class="flex-fill">请按鼠标左键选择图元，或拉框选择，按右键中止或<span class="m">ESC</span>取消</div><div style="width:79px"><span class="m">427.6 FPS</span></div>
</footer>
<div class="taskbar d-flex position-relative">
 <div class="find"><svg width="310" height="16" viewBox="0 0 310 16"><path stroke="#2a5fc0" stroke-width="2" d="M0 15.500h2M29 15.500h2M33 15.500h2"/><path stroke="#444" stroke-width="2" d="M65 15h2M75 15h2M88 15h2M105 15h2M115 15h2M130 15h2M147 15h2"/><path fill="none" stroke="#222" stroke-width="1.500" d="M281 17v-3h6v3"/></svg></div>
 <svg width="520" height="17" viewBox="310 0 520 17"><path stroke="#ddd" d="M330.500 15v2M342.500 15v2M348.500 15v2"/><path fill="none" stroke="#a8a8a8" stroke-width="3" d="M391 18a14 14 0 0 1 18 0"/><circle cx="466" cy="23" r="11" fill="#0a78d7"/><path fill="#f7c948" d="M514 17v-4h10l2 2h15v2z"/><rect x="575" y="10" width="30" height="16" rx="3" fill="#6aa9f7"/><path stroke="#fff" stroke-width="2" d="M581 16h17"/><path fill="#2c6fe0" d="M638 17l14-7 14 7z"/><path fill="#2a9bf0" d="M700 17c8-8 19-8 29-4-8-1-13 1-15 4z"/><path fill="#3b3b3b" d="M746 0h61v17h-61z"/><rect x="761" y="10" width="30" height="16" rx="5" fill="#0a90f8"/><circle cx="776" cy="17" r="3" fill="none" stroke="#fff" stroke-width="1.500"/></svg>
 <svg class="ms-auto" width="431" height="17" viewBox="1300 0 431 17"><circle cx="1337" cy="18" r="3" fill="#eee"/><path fill="#fff" d="M1689 15h20v2h-20z"/></svg>
 <time class="clock">10:41</time>
</div>
<script src="https://cdn.jsdelivr.net/npm/bootstrap@5.3.0/dist/js/bootstrap.bundle.min.js"></script>
</body>
</html>
